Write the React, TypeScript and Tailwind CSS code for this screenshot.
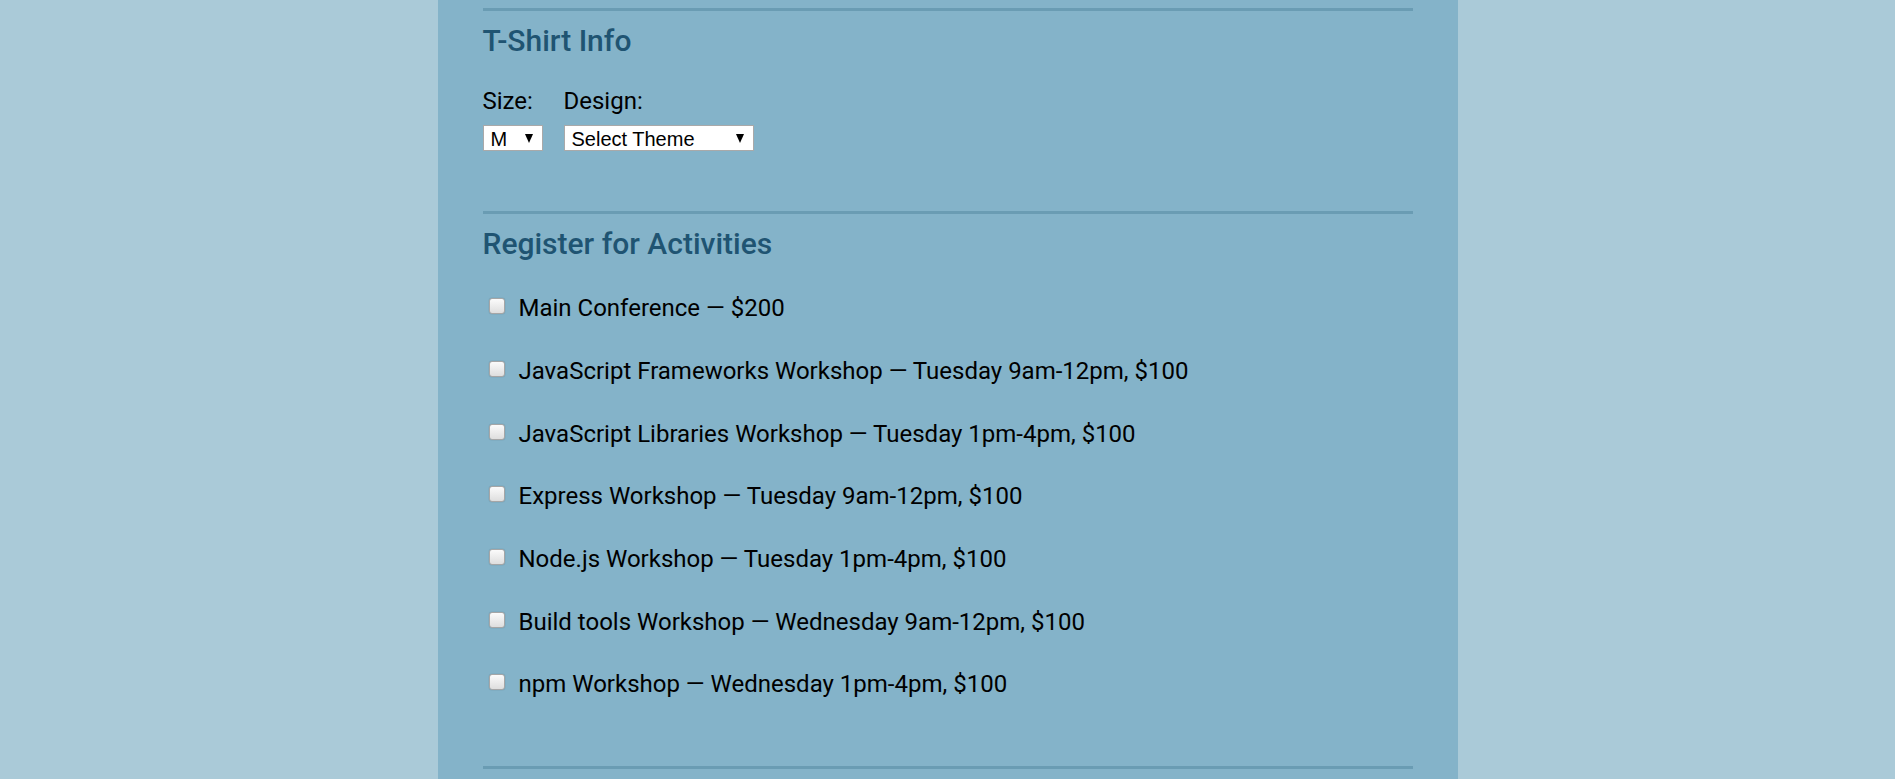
import { useState } from "react";

const activities = [
  "Main Conference — $200",
  "JavaScript Frameworks Workshop — Tuesday 9am-12pm, $100",
  "JavaScript Libraries Workshop — Tuesday 1pm-4pm, $100",
  "Express Workshop — Tuesday 9am-12pm, $100",
  "Node.js Workshop — Tuesday 1pm-4pm, $100",
  "Build tools Workshop — Wednesday 9am-12pm, $100",
  "npm Workshop — Wednesday 1pm-4pm, $100",
];

function Arrow() {
  return (
    <svg
      className="pointer-events-none absolute right-[10px] top-[9px]"
      width="8"
      height="9"
      viewBox="0 0 8 9"
    >
      <polygon points="0,0 8,0 4,9" fill="#000" />
    </svg>
  );
}

function Select({ width, options }: { width: string; options: string[] }) {
  return (
    <div className={`relative ${width}`}>
      <select
        className="block h-[26px] w-full appearance-none rounded-none border border-[#a9a9a9] bg-white pl-[7px] pt-[2px] text-[20px] leading-[22px] text-black outline-none"
        style={{ fontFamily: '"Liberation Sans", Arial, sans-serif' }}
      >
        {options.map((o) => (
          <option key={o}>{o}</option>
        ))}
      </select>
      <Arrow />
    </div>
  );
}

export default function App() {
  const [checked, setChecked] = useState<boolean[]>(activities.map(() => false));

  return (
    <div
      className="min-h-screen bg-[#aacad8] text-black"
      style={{ fontFamily: 'Roboto, "Noto Sans", sans-serif' }}
    >
      <div className="mx-auto w-[1020px] bg-[#84b3c9] px-[45px] pt-[8px] pb-[40px]">
        {/* t-shirt */}
        <fieldset className="border-t-[3px] border-[#6a9cb3]">
          <h2 className="mt-[12px] text-[30px] font-medium leading-[36px] text-[#1f5472]">
            T-Shirt Info
          </h2>
          <div className="mt-[29px] flex gap-[21px]">
            <div className="flex w-[60px] flex-col">
              <label className="text-[24px] leading-[26px]">Size:</label>
              <div className="mt-[11px]">
                <Select width="w-[60px]" options={["M", "S", "L", "XL"]} />
              </div>
            </div>
            <div className="flex flex-col">
              <label className="text-[24px] leading-[26px]">Design:</label>
              <div className="mt-[11px]">
                <Select
                  width="w-[190px]"
                  options={["Select Theme", "Theme - JS Puns", "Theme - I ♥ JS"]}
                />
              </div>
            </div>
          </div>
          <div className="h-[60px]" />
        </fieldset>

        {/* activities */}
        <fieldset className="border-t-[3px] border-[#6a9cb3]">
          <h2 className="mt-[12px] text-[30px] font-medium leading-[36px] text-[#1f5472]">
            Register for Activities
          </h2>
          <div className="mt-[15px]">
            {activities.map((a, i) => (
              <label key={a} className="flex h-[62.67px] items-center">
                <div className="flex items-start">
                  <input
                    type="checkbox"
                    checked={checked[i]}
                    onChange={() =>
                      setChecked((c) => c.map((v, j) => (j === i ? !v : v)))
                    }
                    className="ml-[6px] mt-[3px] h-[16px] w-[16px] appearance-none rounded-[3px] border border-[#a6a6a6] bg-gradient-to-b from-[#fbfbfb] to-[#dedede] shadow-[0_0_1px_rgba(0,0,0,0.35)] checked:bg-[#3b82f6]"
                  />
                  <span className="ml-[14px] text-[24px] leading-[26px]">{a}</span>
                </div>
              </label>
            ))}
          </div>
          <div className="h-[50px]" />
        </fieldset>

        <fieldset className="h-[40px] border-t-[3px] border-[#6a9cb3]" />
      </div>
    </div>
  );
}
